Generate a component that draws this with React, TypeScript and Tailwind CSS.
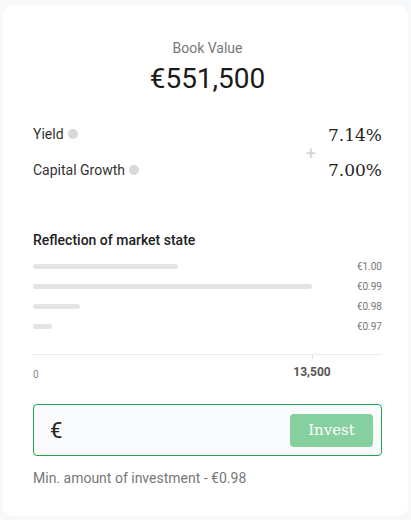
import React from 'react';

const bars = [
    { price: '€1.00', width: 145 },
    { price: '€0.99', width: 279 },
    { price: '€0.98', width: 47 },
    { price: '€0.97', width: 19 },
];

const sans = { fontFamily: 'Roboto, "Noto Sans", sans-serif' };
const slab = { fontFamily: '"DejaVu Serif", "Liberation Serif", serif' };

export default function App() {
    return (
        <div className="min-h-[520px] bg-[#f7f8fa] pt-[5px] pl-[3px] pr-[3px] pb-[4px]" style={sans}>
            <div className="bg-white rounded-[10px] pl-[30px] pr-[26px] pt-[35px] pb-[34px] h-[511px]">
                {/* Book value */}
                <div className="flex flex-col items-center">
                    <div className="text-[14px] leading-[16px] text-[#777]">Book Value</div>
                    <div className="mt-[7px] text-[28px] leading-[32px] text-[#1a1a1a]">€551,500</div>
                </div>

                {/* Yield & growth */}
                <div className="mt-[27px] flex justify-between">
                    <div className="flex flex-col gap-3">
                        <div className="h-6 flex items-center gap-1 text-[14px] text-[#333]">
                            Yield <span className="w-[10px] h-[10px] rounded-full bg-[#d9d9d9]" />
                        </div>
                        <div className="h-6 flex items-center gap-1 text-[14px] text-[#333]">
                            Capital Growth <span className="w-[10px] h-[10px] rounded-full bg-[#d9d9d9]" />
                        </div>
                    </div>
                    <div className="flex items-center gap-[12px] pt-[1px]">
                        <span className="text-[18px] leading-none text-[#d0d0d0] mt-[2px]">+</span>
                        <div className="flex flex-col items-end gap-[11px] text-[17px] leading-[24px] text-[#1f1f1f]" style={slab}>
                            <div>7.14%</div>
                            <div>7.00%</div>
                        </div>
                    </div>
                </div>

                {/* Market state */}
                <div className="mt-[50px] text-[14px] leading-[16px] font-medium text-[#222]">Reflection of market state</div>
                <div className="mt-[16px] flex flex-col gap-[15px]">
                    {bars.map((b) => (
                        <div key={b.price} className="flex items-center justify-between h-[5px]">
                            <div className="h-[5px] rounded-full bg-[#e4e4e4]" style={{ width: b.width }} />
                            <span className="text-[10px] text-[#777]">{b.price}</span>
                        </div>
                    ))}
                </div>
                <div className="mt-[25px] border-t border-[#ececec] relative h-[4px]">
                    <div className="absolute left-[279px] top-0 w-px h-[4px] bg-[#e0e0e0]" />
                </div>
                <div className="relative h-[20px] mt-[6px]">
                    <span className="absolute left-0 top-[3px] text-[10px] text-[#888]">0</span>
                    <span className="absolute left-[279px] -translate-x-1/2 top-0 text-[12px] leading-[16px] font-bold text-[#555]">13,500</span>
                </div>

                {/* Invest input */}
                <div className="mt-[20px] h-[52px] border border-[#1fa64a] rounded-[4px] bg-[#f9fafc] flex items-center pl-[16px] pr-[8px]">
                    <span className="text-[22px] text-[#222]">€</span>
                    <div className="flex-1" />
                    <button className="w-[83px] h-[33px] rounded-[4px] bg-[#86cf9e] text-white text-[15px]" style={slab}>
                        Invest
                    </button>
                </div>
                <div className="mt-[14px] text-[14px] leading-[16px] text-[#777]">Min. amount of investment - €0.98</div>
            </div>
        </div>
    );
}
